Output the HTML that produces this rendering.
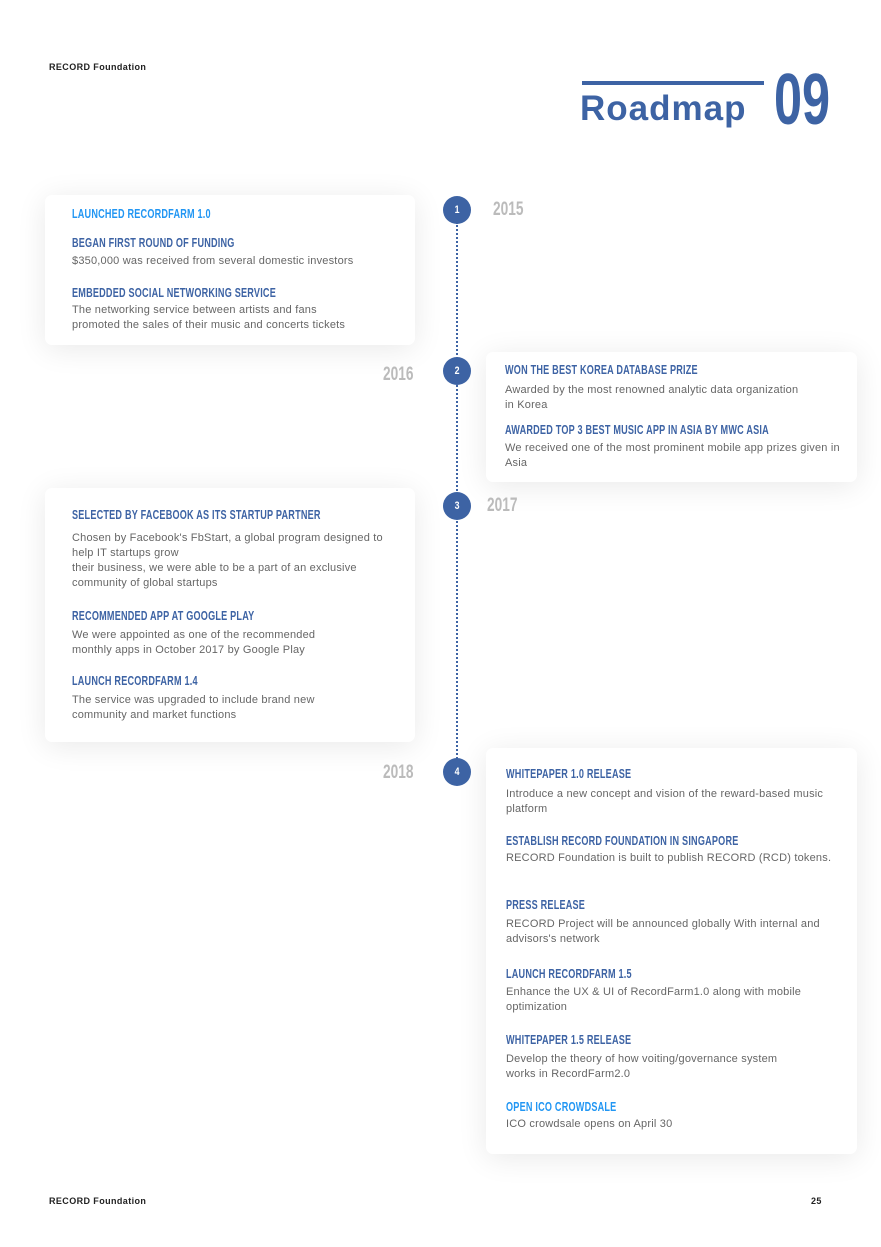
<!DOCTYPE html>
<html><head><meta charset="utf-8"><style>
*{margin:0;padding:0;box-sizing:border-box}
body{width:881px;height:1247px;background:#fff;position:relative;font-family:"Liberation Sans",sans-serif;overflow:hidden}
.a{position:absolute}
.card{position:absolute;background:#fff;border-radius:7px;box-shadow:0 4px 30px rgba(0,0,0,0.09)}
.h{position:absolute;white-space:nowrap;font-weight:bold;font-size:13px;color:#3d63a4;transform:scaleX(.70);transform-origin:0 0;letter-spacing:.3px}
.h.l{color:#2196f3}
.p{position:absolute;font-size:11px;line-height:15px;color:#666;white-space:nowrap;letter-spacing:.2px}
.c{position:absolute;width:28px;height:28px;border-radius:50%;background:#3d63a4;color:#fff;font-weight:bold;font-size:11px;text-align:center;line-height:28px}
.c span{display:inline-block;transform:scaleX(.8)}
.y{position:absolute;font-weight:bold;font-size:19px;color:#bbb;transform:scaleX(.72);transform-origin:0 0}
.f{position:absolute;font-size:9px;font-weight:bold;color:#222;letter-spacing:.4px}
</style></head><body>
<div class="f" style="left:49px;top:62px">RECORD Foundation</div>
<div class="a" style="left:582px;top:81px;width:182px;height:4px;background:#3d63a4"></div>
<div class="a" style="left:580px;top:89px;font-weight:bold;font-size:35px;letter-spacing:1px;color:#3d63a4">Roadmap</div>
<div class="a" style="left:774px;top:64px;font-weight:bold;font-size:72px;line-height:72px;color:#3d63a4;transform:scaleX(.7);transform-origin:0 0">09</div>

<div class="a" style="left:456px;top:222px;height:540px;border-left:2px dotted #3d63a4"></div>

<div class="card" style="left:45px;top:195px;width:370px;height:150px"></div>
<div class="h l" style="left:72px;top:206px">LAUNCHED RECORDFARM 1.0</div>
<div class="h" style="left:72px;top:235px">BEGAN FIRST ROUND OF FUNDING</div>
<div class="p" style="left:72px;top:254px">$350,000 was received from several domestic investors</div>
<div class="h" style="left:72px;top:285px">EMBEDDED SOCIAL NETWORKING SERVICE</div>
<div class="p" style="left:72px;top:303px">The networking service between artists and fans<br>promoted the sales of their music and concerts tickets</div>
<div class="c" style="left:443px;top:196px"><span>1</span></div>
<div class="y" style="left:493px;top:199px">2015</div>

<div class="card" style="left:486px;top:352px;width:371px;height:130px"></div>
<div class="y" style="left:383px;top:364px">2016</div>
<div class="c" style="left:443px;top:357px"><span>2</span></div>
<div class="h" style="left:505px;top:362px">WON THE BEST KOREA DATABASE PRIZE</div>
<div class="p" style="left:505px;top:383px">Awarded by the most renowned analytic data organization<br>in Korea</div>
<div class="h" style="left:505px;top:422px">AWARDED TOP 3 BEST MUSIC APP IN ASIA BY MWC ASIA</div>
<div class="p" style="left:505px;top:441px">We received one of the most prominent mobile app prizes given in<br>Asia</div>

<div class="card" style="left:45px;top:488px;width:370px;height:254px"></div>
<div class="c" style="left:443px;top:492px"><span>3</span></div>
<div class="y" style="left:487px;top:495px">2017</div>
<div class="h" style="left:72px;top:507px">SELECTED BY FACEBOOK AS ITS STARTUP PARTNER</div>
<div class="p" style="left:72px;top:531px">Chosen by Facebook's FbStart, a global program designed to<br>help IT startups grow<br>their business, we were able to be a part of an exclusive<br>community of global startups</div>
<div class="h" style="left:72px;top:608px">RECOMMENDED APP AT GOOGLE PLAY</div>
<div class="p" style="left:72px;top:628px">We were appointed as one of the recommended<br>monthly apps in October 2017 by Google Play</div>
<div class="h" style="left:72px;top:673px">LAUNCH RECORDFARM 1.4</div>
<div class="p" style="left:72px;top:693px">The service was upgraded to include brand new<br>community and market functions</div>

<div class="card" style="left:486px;top:748px;width:371px;height:406px"></div>
<div class="y" style="left:383px;top:762px">2018</div>
<div class="c" style="left:443px;top:758px"><span>4</span></div>
<div class="h" style="left:506px;top:766px">WHITEPAPER 1.0 RELEASE</div>
<div class="p" style="left:506px;top:787px">Introduce a new concept and vision of the reward-based music<br>platform</div>
<div class="h" style="left:506px;top:833px">ESTABLISH RECORD FOUNDATION IN SINGAPORE</div>
<div class="p" style="left:506px;top:851px">RECORD Foundation is built to publish RECORD (RCD) tokens.</div>
<div class="h" style="left:506px;top:897px">PRESS RELEASE</div>
<div class="p" style="left:506px;top:917px">RECORD Project will be announced globally With internal and<br>advisors's network</div>
<div class="h" style="left:506px;top:966px">LAUNCH RECORDFARM 1.5</div>
<div class="p" style="left:506px;top:985px">Enhance the UX &amp; UI of RecordFarm1.0 along with mobile<br>optimization</div>
<div class="h" style="left:506px;top:1032px">WHITEPAPER 1.5 RELEASE</div>
<div class="p" style="left:506px;top:1052px">Develop the theory of how voiting/governance system<br>works in RecordFarm2.0</div>
<div class="h l" style="left:506px;top:1099px">OPEN ICO CROWDSALE</div>
<div class="p" style="left:506px;top:1117px">ICO crowdsale opens on April 30</div>

<div class="f" style="left:49px;top:1196px">RECORD Foundation</div>
<div class="f" style="left:811px;top:1196px">25</div>
</body></html>
